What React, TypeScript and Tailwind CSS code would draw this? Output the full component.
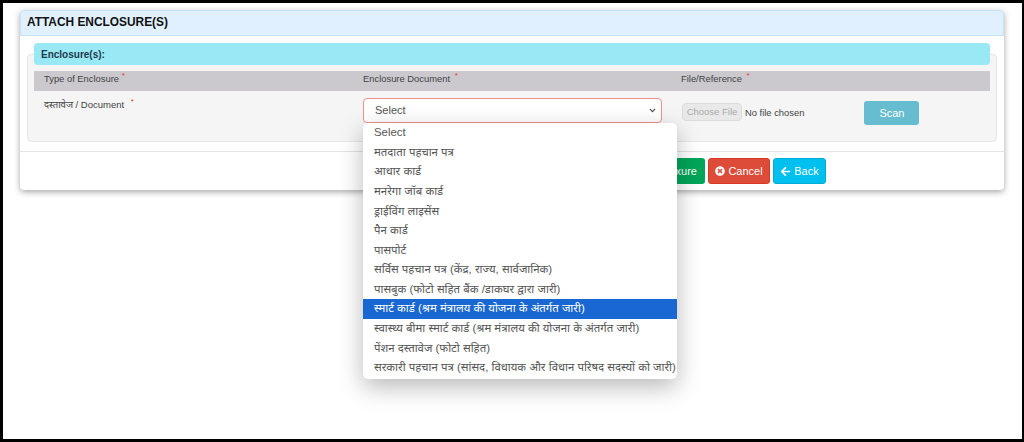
import { FaArrowLeft, FaTimesCircle } from 'react-icons/fa';
import { ChevronDown } from 'lucide-react';

const OPTIONS = [
  'Select',
  'मतदाता पहचान पत्र',
  'आधार कार्ड',
  'मनरेगा जॉब कार्ड',
  'ड्राईविंग लाइसेंस',
  'पैन कार्ड',
  'पासपोर्ट',
  'सर्विस पहचान पत्र (केंद्र, राज्य, सार्वजानिक)',
  'पासबुक (फोटो सहित बैंक /डाकघर द्वारा जारी)',
  'स्मार्ट कार्ड (श्रम मंत्रालय की योजना के अंतर्गत जारी)',
  'स्वास्थ्य बीमा स्मार्ट कार्ड (श्रम मंत्रालय की योजना के अंतर्गत जारी)',
  'पेंशन दस्तावेज (फोटो सहित)',
  'सरकारी पहचान पत्र (सांसद, विधायक और विधान परिषद सदस्यों को जारी)',
];

const SELECTED = 9;

function Required({ className = '' }: { className?: string }) {
  return <span className={`text-[#e53935] text-[8px] leading-[8px] align-top ${className}`}>*</span>;
}

export default function App() {
  return (
    <div className="h-[442px] overflow-hidden bg-white border-t-[3px] border-b-[3px] border-l-[3px] border-r-[2px] border-black font-['Liberation_Sans','Noto_Sans',sans-serif] text-[#555]">
      <div className="ml-[17px] mr-[18px] mt-[7px] bg-white rounded shadow-[0_2px_6px_rgba(0,0,0,0.35)]">
        {/* Header */}
        <div className="h-[26px] px-[6px] flex items-center bg-[#e0f0fe] border border-[#c6e3fb] rounded-t">
          <h1 className="text-[11.9px] font-bold text-[#111]">ATTACH ENCLOSURE(S)</h1>
        </div>

        {/* Body */}
        <div className="px-[7px] pt-[7px] pb-[9px] border-b border-[#e4e4e4]">
          <div className="relative mx-[7px] h-[22px] px-[7px] flex items-center bg-[#98e8f5] rounded-sm z-10">
            <span className="text-[10px] font-bold text-[#1f3a4a]">Enclosure(s):</span>
          </div>
          <div className="-mt-[11px] h-[88px] bg-[#f5f5f5] border border-[#e6e6e6] rounded px-[6px] pt-[16px]">
            <div className="h-[20px] grid grid-cols-[319px_318px_1fr] bg-[#cbc9cd] pl-[10px] pt-[1px] text-[9.4px] leading-[14px] text-[#444]">
              <div>Type of Enclosure <Required /></div>
              <div>Enclosure Document <Required className="ml-0.5" /></div>
              <div>File/Reference <Required className="ml-0.5" /></div>
            </div>
            <div className="grid grid-cols-[319px_318px_1fr] pl-[10px] pt-[7px] text-[9.5px]">
              <div className="text-[#444]">
                दस्तावेज / Document <Required className="ml-1" />
              </div>
              <div className="relative">
                <div className="w-[299px] h-[25px] flex items-center justify-between pl-[11px] pr-[4px] bg-white border border-[#ef8f8f] rounded text-[11px]">
                  <span>Select</span>
                  <ChevronDown size={9} strokeWidth={3} className="text-[#444]" />
                </div>
                {/* Open dropdown list */}
                <ul className="absolute z-20 left-0 top-[25px] w-[314px] pb-px bg-white rounded-[5px] overflow-hidden shadow-[0_8px_24px_rgba(0,0,0,0.28)] text-[11.4px]">
                  {OPTIONS.map((option, i) => (
                    <li
                      key={option}
                      className={`h-[19.58px] pl-[11px] flex items-center whitespace-nowrap ${
                        i === SELECTED ? 'bg-[#1967d2] text-white' : 'text-[#555]'
                      }`}
                    >
                      {option}
                    </li>
                  ))}
                </ul>
              </div>
              <div className="flex items-start pt-[3px] pl-px">
                <span className="w-[60px] h-[18px] mt-[2px] flex items-center justify-center bg-[#e9e9e9] border border-[#dcdcdc] rounded-sm text-[9.5px] text-[#aaa]">
                  Choose File
                </span>
                <span className="ml-[3px] mt-[5px] text-[9.4px] text-[#444]">No file chosen</span>
                <button className="ml-[60px] w-[55px] h-[24px] bg-[#66bdd0] rounded-[3px] text-white text-[11px]">
                  Scan
                </button>
              </div>
            </div>
          </div>
        </div>

        {/* Actions */}
        <div className="h-[38px] pt-[6px] pl-[603px] flex items-start gap-[3px] text-[11px] text-white">
          <button className="w-[82px] h-[26px] bg-[#00a65a] rounded-[3px] text-right pr-[8px]">Add Annexure</button>
          <button className="w-[62px] h-[26px] flex items-center justify-center gap-[3px] bg-[#dd4b39] border border-[#d73925] rounded-[3px]">
            <FaTimesCircle size={10} /> Cancel
          </button>
          <button className="w-[53px] h-[26px] flex items-center justify-center gap-[3px] bg-[#00c0ef] border border-[#00acd6] rounded-[3px]">
            <FaArrowLeft size={11} /> Back
          </button>
        </div>
      </div>
    </div>
  );
}
